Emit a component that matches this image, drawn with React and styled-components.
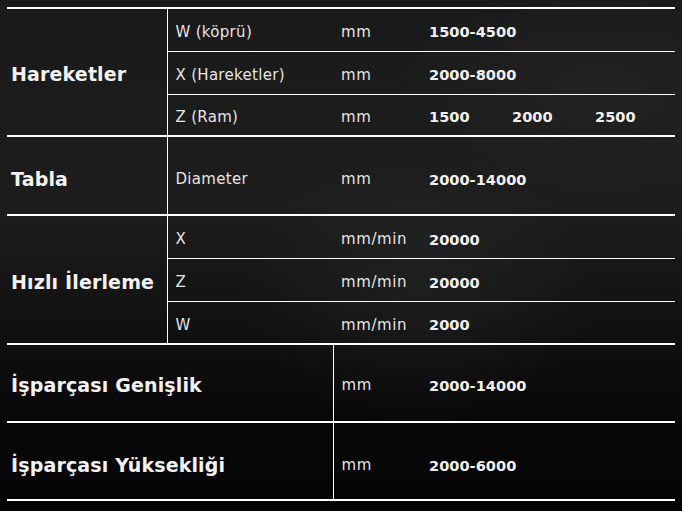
import React from "react";
import styled, { createGlobalStyle } from "styled-components";

const Global = createGlobalStyle`
  html, body { margin: 0; padding: 0; }
  body {
    width: 682px;
    height: 511px;
    overflow: hidden;
    background:
      radial-gradient(ellipse 260px 200px at 420px 290px, rgba(255,255,255,0.045), rgba(255,255,255,0) 70%),
      radial-gradient(ellipse 300px 160px at 600px 90px, rgba(255,255,255,0.03), rgba(255,255,255,0) 70%),
      linear-gradient(180deg, #1a1a1a 0%, #1d1d1d 40%, #121212 62%, #080808 82%, #040404 100%);
    font-family: "DejaVu Sans", "Liberation Sans", sans-serif;
    color: #ececec;
  }
`;

const Page = styled.div`
  padding: 7px 0 0 7px;
`;

const Table = styled.table`
  width: 668px;
  border-collapse: collapse;
  table-layout: fixed;
`;

const Row = styled.tr`
  height: ${(p) => p.$h}px;
  & > td {
    border-top: ${(p) => (p.$start ? "2px solid #fff" : "1px solid #fff")};
    padding-top: ${(p) => p.$pt ?? 4}px;
  }
  &:last-child > td { border-bottom: 2px solid #fff; }
`;

const Cell = styled.td`
  padding: 0 8px;
  vertical-align: middle;
  white-space: nowrap;
  overflow: visible;
`;

const Label = styled(Cell)`
  padding-left: 4px;
  padding-right: 4px;
  font-size: 19px;
  font-weight: 700;
  letter-spacing: 0.15px;
  color: #f2f2f2;
  border-right: 1px solid #fff;
  border-top: 2px solid #fff !important;
`;

const Sub = styled(Cell)`
  font-size: 15px;
  letter-spacing: 0.3px;
  color: #e4e4e4;
`;

const Unit = styled(Cell)`
  font-size: 15px;
  letter-spacing: 0.6px;
  color: #e4e4e4;
`;

const Value = styled(Cell)`
  font-size: 14.6px;
  font-weight: 700;
  color: #f0f0f0;
`;

const Triple = styled.div`
  display: flex;
`;

const TripleItem = styled.span`
  flex: 0 0 83px;
`;

export default function App() {
  return (
    <>
      <Global />
      <Page>
        <Table>
          <colgroup>
            <col style={{ width: 160 }} />
            <col style={{ width: 166 }} />
            <col style={{ width: 88 }} />
            <col />
          </colgroup>
          <tbody>
            <Row $start $h={43}>
              <Label rowSpan={3}>Hareketler</Label>
              <Sub>W (köprü)</Sub>
              <Unit>mm</Unit>
              <Value>1500-4500</Value>
            </Row>
            <Row $h={43}>
              <Sub>X (Hareketler)</Sub>
              <Unit>mm</Unit>
              <Value>2000-8000</Value>
            </Row>
            <Row $h={42}>
              <Sub>Z (Ram)</Sub>
              <Unit>mm</Unit>
              <Value>
                <Triple>
                  <TripleItem>1500</TripleItem>
                  <TripleItem>2000</TripleItem>
                  <TripleItem>2500</TripleItem>
                </Triple>
              </Value>
            </Row>
            <Row $start $h={79} $pt={7}>
              <Label>Tabla</Label>
              <Sub>Diameter</Sub>
              <Unit>mm</Unit>
              <Value>2000-14000</Value>
            </Row>
            <Row $start $h={43} $pt={5}>
              <Label rowSpan={3}>Hızlı İlerleme</Label>
              <Sub>X</Sub>
              <Unit>mm/min</Unit>
              <Value>20000</Value>
            </Row>
            <Row $h={43} $pt={5}>
              <Sub>Z</Sub>
              <Unit>mm/min</Unit>
              <Value>20000</Value>
            </Row>
            <Row $h={43} $pt={5}>
              <Sub>W</Sub>
              <Unit>mm/min</Unit>
              <Value>2000</Value>
            </Row>
            <Row $start $h={78} $pt={4}>
              <Label colSpan={2}>İşparçası Genişlik</Label>
              <Unit>mm</Unit>
              <Value>2000-14000</Value>
            </Row>
            <Row $start $h={78} $pt={8}>
              <Label colSpan={2}>İşparçası Yüksekliği</Label>
              <Unit>mm</Unit>
              <Value>2000-6000</Value>
            </Row>
          </tbody>
        </Table>
      </Page>
    </>
  );
}
